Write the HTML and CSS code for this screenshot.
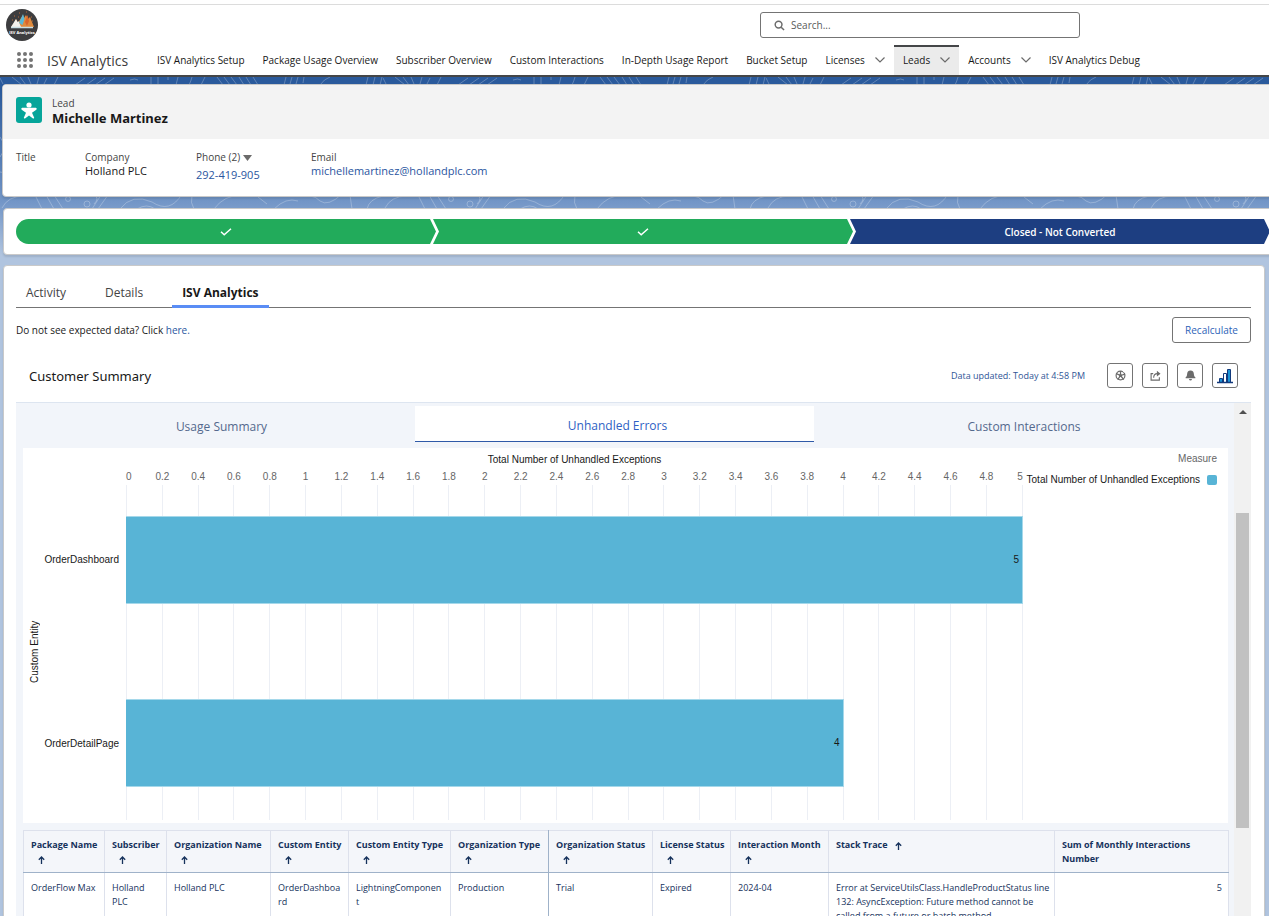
FILE: index.html
```html
<!DOCTYPE html>
<html lang="en">
<head>
<meta charset="utf-8">
<title>Michelle Martinez | Lead</title>
<link rel="stylesheet" href="styles.css">
</head>
<body>
<div class="app">
  <header class="top">
    <div class="brand-row">
      <svg class="logo" viewBox="0 0 32 32" role="img" aria-label="ISV Analytics logo">
        <circle cx="16" cy="16" r="16" fill="#3d3d3f"/>
        <path d="M5 18l3-4 2-4 2 4 3-5 2-3 1 3 2-3 2 4 2-2 2 5 2 5z" fill="#e08a3c"/>
        <path d="M5 18l5-8 1.500 3 1-1 2.500 6z" fill="#f4f1ec"/>
        <path d="M13 14l4-9 1.500 5-2 6z" fill="#58b8d8"/>
        <path d="M19 13l2.500-7 1.500 6-2 5z" fill="#d8642c"/>
        <path d="M5 18.500h22" stroke="#c9dfe4" stroke-width="1.500"/>
        <path d="M8 7h1M13 4h1M20 3h1M25 8h1M12 8h1M6 11h1M26 12h1" stroke="#b96b3a"/>
        <text x="16" y="24.500" text-anchor="middle" class="logo-text">ISV Analytics</text>
      </svg>
      <label class="search">
        <svg viewBox="0 0 12 12" class="search-icon" aria-hidden="true"><circle cx="5" cy="5" r="3.700"/><path d="M7.800 7.800l3.200 3.200"/></svg>
        <input type="search" placeholder="Search..." aria-label="Search">
      </label>
    </div>
    <nav class="nav" aria-label="App">
      <button class="waffle" aria-label="App Launcher">
        <svg viewBox="0 0 16 16" aria-hidden="true"><g><circle cx="2" cy="2" r="2"/><circle cx="8" cy="2" r="2"/><circle cx="14" cy="2" r="2"/><circle cx="2" cy="8" r="2"/><circle cx="8" cy="8" r="2"/><circle cx="14" cy="8" r="2"/><circle cx="2" cy="14" r="2"/><circle cx="8" cy="14" r="2"/><circle cx="14" cy="14" r="2"/></g></svg>
      </button>
      <span class="app-name">ISV Analytics</span>
      <a href="#">ISV Analytics Setup</a>
      <a href="#">Package Usage Overview</a>
      <a href="#">Subscriber Overview</a>
      <a href="#">Custom Interactions</a>
      <a href="#">In-Depth Usage Report</a>
      <a href="#">Bucket Setup</a>
      <a href="#">Licenses <svg class="chev" viewBox="0 0 10 6" aria-hidden="true"><path d="M.5.5L5 5l4.500-4.500"/></svg></a>
      <a href="#" class="current" aria-current="page">Leads <svg class="chev" viewBox="0 0 10 6" aria-hidden="true"><path d="M.5.5L5 5l4.500-4.500"/></svg></a>
      <a href="#">Accounts <svg class="chev" viewBox="0 0 10 6" aria-hidden="true"><path d="M.5.5L5 5l4.500-4.500"/></svg></a>
      <a href="#">ISV Analytics Debug</a>
    </nav>
  </header>

  <main class="page">
    <svg class="backdrop" aria-hidden="true">
      <defs>
        <pattern id="waves" width="383" height="190" patternUnits="userSpaceOnUse">
          <g fill="none" stroke="#fff" stroke-opacity=".25" stroke-width="1">
            <path d="M0 1l3 6M12 0l10 8M20 0l6 8M28 0l3 7M39 0l-2 7M47 1l-3 6M58 0l-4 8M75 8l10-7M86 8l10-7M95 8l10-7M104 8l10-7M130 3q5-2 8 0M151 0v8M158 0v8M168 0v3M178 0l-2 8M192 0q-1 4-3 8M205 0l-4 8M217 0l6 8M224 0l6 8M231 0l6 8M239 0l5 8M246 0l5 8M253 0l5 8M284 8l2-8M290 7l2-7M296 7l2-7M303 6l1-6M320 8q4-6 10-8M366 8l2-8M373 8l2-8M380 8l2-8"/>
            <path d="M2 131q6-12 22-12M35 118l7 14M46 118l8 14M54 118l9 14M101 118l-9 14M108 118l-10 14M120 132q12-16 32-7 18 12 30-8M137 132q10-6 18 0M192 118q-2 8 2 14M214 132q10-14 28-14M258 120l9 7M274 132q12-12 24-8M288 118q26-2 32 6 8 6 22-7M350 118l2 14M367 132q2-10 16-13"/>
            <circle cx="68" cy="122" r="2.500"/><circle cx="87" cy="127" r="3"/>
            <path d="M94 118q6 3 0 9M0 60q8 10 0 20M0 95q12 0 12 15"/>
          </g>
        </pattern>
      </defs>
      <rect width="100%" height="132" fill="url(#waves)"/>
    </svg>

    <section class="card record">
      <div class="record-head">
        <svg class="lead-icon" viewBox="0 0 26 26" aria-hidden="true"><rect width="26" height="26" rx="3" fill="#06a59a"/><circle cx="13" cy="8" r="2.600" fill="#fff"/><path d="M6 10.800h14q1.500.9.300 2L16 15.800l2.200 5q0 1-1.200.6L13 18.400l-4 3q-1.200.4-1.200-.6l2.200-5L5.700 12.800q-1.200-1.100.3-2z" fill="#fff"/></svg>
        <div>
          <p class="kind">Lead</p>
          <h1>Michelle Martinez</h1>
        </div>
      </div>
      <dl class="fields">
        <div class="f-title"><dt>Title</dt></div>
        <div class="f-company"><dt>Company</dt><dd>Holland PLC</dd></div>
        <div class="f-phone"><dt>Phone (2) <svg class="caret" viewBox="0 0 9 6" aria-hidden="true"><path d="M0 0h9L4.500 6z"/></svg></dt><dd><a href="#">292-419-905</a></dd></div>
        <div class="f-email"><dt>Email</dt><dd><a href="#">michellemartinez@hollandplc.com</a></dd></div>
      </dl>
    </section>

    <section class="card path">
      <ol class="steps">
        <li class="step done first"><svg viewBox="0 0 12 8" role="img" aria-label="Stage complete"><path d="M1 3.800l3.200 3L11 .8"/></svg></li>
        <li class="step done"><svg viewBox="0 0 12 8" role="img" aria-label="Stage complete"><path d="M1 3.800l3.200 3L11 .8"/></svg></li>
        <li class="step closed">Closed - Not Converted</li>
      </ol>
    </section>

    <section class="card detail">
      <div class="tabs" role="tablist">
        <button role="tab">Activity</button>
        <button role="tab">Details</button>
        <button role="tab" class="on" aria-selected="true">ISV Analytics</button>
      </div>
      <div class="notice">
        <p>Do not see expected data? Click <a href="#">here.</a></p>
        <button class="recalc">Recalculate</button>
      </div>
      <div class="dash-head">
        <h2>Customer Summary</h2>
        <p class="updated">Data updated: Today at 4:58 PM</p>
        <button class="tool" aria-label="Dashboard options"><svg viewBox="0 0 12 12"><circle cx="6" cy="6" r="4.800" fill="none" stroke="#6b6b6b" stroke-width="1.300"/><path d="M6 6V1M6 6L1.500 4M6 6l-3 4.500M6 6l3.500 4.500M6 6l5-1.500" stroke="#6b6b6b" stroke-width="1.400"/><circle cx="6" cy="6" r="1.700" fill="#6b6b6b"/><path d="M7.500 0H12v3.200L9.500 2.500z" fill="#fff"/></svg></button>
        <button class="tool" aria-label="Share"><svg viewBox="0 0 12 12" fill="none" stroke="#6b6b6b" stroke-width="1.200"><path d="M3.500 4H1.200v7h9V8"/><path d="M4 8.500q0-4.500 4-4.500"/><path d="M7.500.8L11.500 4l-4 3.200z" fill="#6b6b6b" stroke="none"/></svg></button>
        <button class="tool" aria-label="Subscribe"><svg viewBox="0 0 12 12" fill="#6b6b6b"><path d="M6 .5q3.700.3 3.700 4 0 2.600 1.600 3.500v.9H.7V8q1.600-.9 1.600-3.500Q2.300.8 6 .5zM4.300 9.800h3.400Q7.300 11.500 6 11.500T4.300 9.800z"/></svg></button>
        <button class="tool chart-tool" aria-label="Open in Analytics"><svg viewBox="0 0 16 16" stroke="#123a7c"><path d="M2.500 10.500h3v4h-3z" fill="#1b96d8"/><path d="M6.500 5.500h3v9h-3z" fill="#fff"/><path d="M10.500 1.500h3v13h-3z" fill="#1b96d8"/><path d="M0 14.500h16" stroke-width="1.500"/></svg></button>
      </div>

      <div class="dash">
        <div class="dash-main">
          <div class="dash-tabs" role="tablist">
            <button role="tab">Usage Summary</button>
            <button role="tab" class="on" aria-selected="true">Unhandled Errors</button>
            <button role="tab">Custom Interactions</button>
          </div>

          <div class="chart">
            <div class="y-axis">
              <span class="y-name">Custom Entity</span>
              <div class="y-labels"><span>OrderDashboard</span><span>OrderDetailPage</span></div>
            </div>
            <div class="plot">
              <p class="x-name">Total Number of Unhandled Exceptions</p>
              <div class="ticks">
                <i class="from">0</i><i>0.2</i><i>0.4</i><i>0.6</i><i>0.8</i><i>1</i><i>1.2</i><i>1.4</i><i>1.6</i><i>1.8</i><i>2</i><i>2.2</i><i>2.4</i><i>2.6</i><i>2.8</i><i>3</i><i>3.2</i><i>3.4</i><i>3.6</i><i>3.8</i><i>4</i><i>4.2</i><i>4.4</i><i>4.6</i><i>4.8</i><i class="to">5</i>
              </div>
              <div class="bars">
                <div class="bar" style="width:100%">5</div>
                <div class="bar" style="width:80%">4</div>
              </div>
            </div>
            <div class="legend">
              <p>Measure</p>
              <div class="key">Total Number of Unhandled Exceptions <span class="swatch"></span></div>
            </div>
          </div>

          <table class="grid">
            <colgroup><col class="w81"><col class="w62"><col class="w104"><col class="w78"><col class="w102"><col class="w98"><col class="w104"><col class="w78"><col class="w98"><col class="w226"><col class="w174"></colgroup>
            <thead>
              <tr>
                <th>Package Name<svg class="up under" viewBox="0 0 7 8"><path d="M3.500 8V1M.8 3.800l2.700-2.800 2.700 2.800"/></svg></th>
                <th>Subscriber<svg class="up under" viewBox="0 0 7 8"><path d="M3.500 8V1M.8 3.800l2.700-2.800 2.700 2.800"/></svg></th>
                <th>Organization Name<svg class="up under" viewBox="0 0 7 8"><path d="M3.500 8V1M.8 3.800l2.700-2.800 2.700 2.800"/></svg></th>
                <th>Custom Entity<svg class="up under" viewBox="0 0 7 8"><path d="M3.500 8V1M.8 3.800l2.700-2.800 2.700 2.800"/></svg></th>
                <th>Custom Entity Type<svg class="up under" viewBox="0 0 7 8"><path d="M3.500 8V1M.8 3.800l2.700-2.800 2.700 2.800"/></svg></th>
                <th class="frozen">Organization Type<svg class="up under" viewBox="0 0 7 8"><path d="M3.500 8V1M.8 3.800l2.700-2.800 2.700 2.800"/></svg></th>
                <th>Organization Status<svg class="up under" viewBox="0 0 7 8"><path d="M3.500 8V1M.8 3.800l2.700-2.800 2.700 2.800"/></svg></th>
                <th>License Status<svg class="up under" viewBox="0 0 7 8"><path d="M3.500 8V1M.8 3.800l2.700-2.800 2.700 2.800"/></svg></th>
                <th>Interaction Month<svg class="up under" viewBox="0 0 7 8"><path d="M3.500 8V1M.8 3.800l2.700-2.800 2.700 2.800"/></svg></th>
                <th>Stack Trace<svg class="up" viewBox="0 0 7 8"><path d="M3.500 8V1M.8 3.800l2.700-2.800 2.700 2.800"/></svg></th>
                <th class="wrap">Sum of Monthly Interactions Number</th>
              </tr>
            </thead>
            <tbody>
              <tr>
                <td>OrderFlow Max</td>
                <td>Holland PLC</td>
                <td>Holland PLC</td>
                <td>OrderDashboard</td>
                <td>LightningComponent</td>
                <td class="frozen">Production</td>
                <td>Trial</td>
                <td>Expired</td>
                <td>2024-04</td>
                <td class="trace">Error at ServiceUtilsClass.HandleProductStatus line 132: AsyncException: Future method cannot be called from a future or batch method</td>
                <td class="num">5</td>
              </tr>
            </tbody>
          </table>
        </div>
        <div class="scroll" aria-hidden="true">
          <svg viewBox="0 0 8 4"><path d="M0 4l4-4 4 4z"/></svg>
          <div class="thumb"></div>
        </div>
      </div>
    </section>
  </main>
</div>
</body>
</html>
```
FILE: styles.css
```css
* { box-sizing: border-box; }
body { margin: 0; font-family: "Open Sans", "Noto Sans", sans-serif; font-size: 10px; line-height: 14px; color: #181818; background: #b0c4df; }
p, h1, h2, dl, dd, ol { margin: 0; padding: 0; }
button { font: inherit; color: inherit; background: none; border: 0; padding: 0; cursor: pointer; }
a { color: #2a55a0; text-decoration: none; }
.app { height: 100vh; overflow: hidden; display: flex; flex-direction: column; }

.top { background: #fff; border-bottom: 2px solid #444648; padding-top: 4px; flex: none; }
.brand-row { display: flex; align-items: center; height: 41px; border-top: 1px solid #dcdcdc; padding: 0 189px 0 6px; }
.logo { width: 32px; height: 32px; }
.logo-text { font: bold 4px "Open Sans", sans-serif; fill: #fff; }
.search { margin-left: auto; width: 320px; height: 26px; border: 1px solid #747474; border-radius: 3px; display: flex; align-items: center; gap: 6px; padding: 0 13px; }
.search-icon { width: 11px; height: 11px; fill: none; stroke: #6b6b6b; stroke-width: 1.600; flex: none; }
.search input { flex: 1; min-width: 0; border: 0; outline: 0; padding: 0; font: inherit; background: none; }
.search input::placeholder { color: #5a5a5a; opacity: 1; }
.nav { display: flex; height: 30px; }
.waffle { margin-left: 17px; width: 16px; flex: none; display: flex; align-items: center; }
.waffle svg { width: 16px; height: 16px; fill: #747474; }
.app-name { width: 101px; margin-left: 14px; font-size: 14px; line-height: 32px; color: #3b3b3b; white-space: nowrap; flex: none; }
.nav a { display: flex; align-items: center; gap: 10px; padding: 0 9px; color: #181818; white-space: nowrap; }
.nav .current { background: #ebebeb; box-shadow: inset 0 2px #444648; }
.chev { width: 10px; height: 6px; fill: none; stroke: #6b6b6b; stroke-width: 1.200; }

.page { position: relative; flex: 1; min-height: 0; overflow: hidden; padding: 7px 4px 0 2px; background: linear-gradient(#2a5a9c 0, #2a5a9c 10px, #7396c7 125px, #b0c4df 178px); }
.backdrop { position: absolute; inset: 0; width: 100%; height: 132px; }
.card { position: relative; background: #fff; border: 1px solid #c9c9c9; border-radius: 4px; box-shadow: 0 2px 2px rgba(0, 0, 0, .1); overflow: hidden; }
.record { margin-right: -12px; }
.record-head { display: flex; gap: 10px; background: #f3f3f3; height: 54px; padding: 12px 13px 0; }
.lead-icon { width: 26px; height: 26px; }
.kind { line-height: 12px; color: #444; }
h1 { font-family: "Noto Sans", sans-serif; font-size: 13px; line-height: 18px; font-weight: 700; }
.fields { display: flex; padding: 11px 13px 18px; height: 57px; }
.fields dt { color: #444; }
.fields dd { font-size: 11px; }
.f-title { width: 69px; }
.f-company { width: 111px; }
.f-phone { width: 115px; }
.f-phone dd { padding-top: 4px; }
.caret { width: 9px; height: 6px; fill: #6b6b6b; }

.path { margin: 11px -12px 0 1px; padding: 10px 6px 10px 12px; }
.steps { display: flex; list-style: none; }
.step { flex: 1; height: 25px; display: flex; align-items: center; justify-content: center; color: #fff; font-weight: 600; clip-path: polygon(0 0, calc(100% - 6px) 0, 100% 50%, calc(100% - 6px) 100%, 0 100%, 6px 50%); }
.step + .step { margin-left: -3px; }
.first { border-radius: 13px 0 0 13px; clip-path: polygon(0 0, calc(100% - 6px) 0, 100% 50%, calc(100% - 6px) 100%, 0 100%); }
.step svg { width: 12px; height: 8px; fill: none; stroke: #fff; stroke-width: 1.500; }
.done { background: #22ab5b; }
.closed { background: #1d3e81; }

.detail { margin: 10px 0 0 1px; padding: 7px 13px 0 12px; height: 100%; }
.tabs { display: flex; border-bottom: 1px solid #747474; }
.tabs button { font-size: 12px; height: 35px; padding: 4px 10px 0; margin: 0 19px -1px 0; color: #444; }
.tabs .on { font-weight: 700; color: #181818; box-shadow: inset 0 -3px #5a8df5; }
.notice { display: flex; justify-content: space-between; align-items: center; padding-top: 9px; }
.recalc { border: 1px solid #747474; border-radius: 3px; height: 26px; width: 79px; color: #2e63b8; }
.dash-head { display: flex; align-items: center; height: 60px; padding: 6px 13px 0; gap: 9px; border-bottom: 1px solid #dde5f0; }
h2 { font-family: "Noto Sans", sans-serif; font-size: 13px; line-height: 18px; font-weight: 400; margin-right: auto; }
.updated { font-size: 9px; color: #2f5596; margin-right: 13px; }
.tool { width: 26px; height: 25px; border: 1px solid #747474; border-radius: 3px; display: grid; place-items: center; }
.tool svg { width: 11px; height: 11px; }
.chart-tool svg { width: 16px; height: 16px; }

.dash { display: flex; height: 100%; }
.dash-main { flex: 1; min-width: 0; background: #f2f5fa; padding-right: 6px; }
.dash-tabs { display: grid; grid-template-columns: 399fr 399fr 420fr; margin-right: -6px; height: 45px; padding: 3px 0 6px; }
.dash-tabs button { font-size: 12px; color: #54698d; padding: 5px 0 0 12px; }
.dash-tabs button:last-child { padding-left: 0; }
.dash-tabs .on { background: #fff; color: #2e5fc4; border-bottom: 1px solid #2f5aa8; padding-left: 6px; }

.chart { margin-left: 7px; height: 375px; background: #fff; display: grid; grid-template-columns: 103px 1fr 205px; font-family: "Liberation Sans", Arial, sans-serif; line-height: 12px; }
.y-axis { display: flex; justify-content: space-between; padding: 20px 7px 0 6px; }
.y-name { writing-mode: vertical-rl; transform: rotate(180deg); text-align: center; margin-bottom: -12px; }
.y-labels { display: flex; flex-direction: column; padding-top: 86px; gap: 172px; text-align: right; }
.plot { display: grid; grid-template-rows: 23px 349px; }
.plot > * { grid-column: 1; min-width: 0; }
.x-name { text-align: center; padding-top: 6px; }
.ticks { grid-row: 2; display: flex; justify-content: space-between; }
.ticks i { width: 1px; font-style: normal; color: #666; background: linear-gradient(#eceff5, #eceff5) 0 14px no-repeat; display: flex; justify-content: center; white-space: nowrap; }
.ticks .from { justify-content: flex-start; }
.ticks .to { justify-content: flex-end; }
.bars { grid-row: 2; display: flex; flex-direction: column; gap: 95px; padding-top: 45px; }
.bar { height: 88px; background: #58b4d6; border: 1px solid #a5d8ea; border-left: 0; display: flex; align-items: center; justify-content: flex-end; padding-right: 3px; }
.legend { padding: 5px 11px 0 0; text-align: right; color: #666; }
.key { display: flex; align-items: center; justify-content: flex-end; gap: 7px; margin-top: 9px; color: #181818; white-space: nowrap; }
.swatch { width: 10px; height: 10px; border-radius: 2px; background: #58b4d6; }

.grid { margin: 7px 0 0 7px; width: calc(100% - 7px); table-layout: fixed; border-collapse: collapse; font-size: 9px; color: #16325c; background: #fff; }
.w62 { width: 62px; } .w78 { width: 78px; } .w81 { width: 81px; } .w98 { width: 98px; } .w102 { width: 102px; } .w104 { width: 104px; } .w174 { width: 174px; } .w226 { width: 226px; }
.grid th, .grid td { border: 1px solid #dde1ec; padding: 7px 6px 7px 7px; text-align: left; vertical-align: top; overflow-wrap: anywhere; }
.grid th { background: #f4f6fa; font-weight: 700; border-bottom-color: #9fb2c9; height: 42px; padding-right: 0; padding-bottom: 5px; white-space: nowrap; }
.grid .wrap { white-space: normal; padding-right: 20px; }
.grid td { padding-top: 8px; }
.grid .trace { padding-right: 2px; }
.grid .frozen { border-right-color: #9fb2c9; }
.grid .num { text-align: right; padding-right: 6px; }
.up { width: 7px; height: 8px; margin-left: 7px; fill: none; stroke: #16325c; stroke-width: 1.300; vertical-align: middle; }
.under { display: block; margin: 4px 0 0 7px; }

.scroll { width: 17px; background: #f1f1f1; display: flex; flex-direction: column; align-items: center; padding-top: 7px; }
.scroll svg { width: 8px; height: 4px; fill: #505050; flex: none; }
.thumb { width: 13px; height: 315px; margin-top: 99px; background: #c1c1c1; flex: none; }
```
